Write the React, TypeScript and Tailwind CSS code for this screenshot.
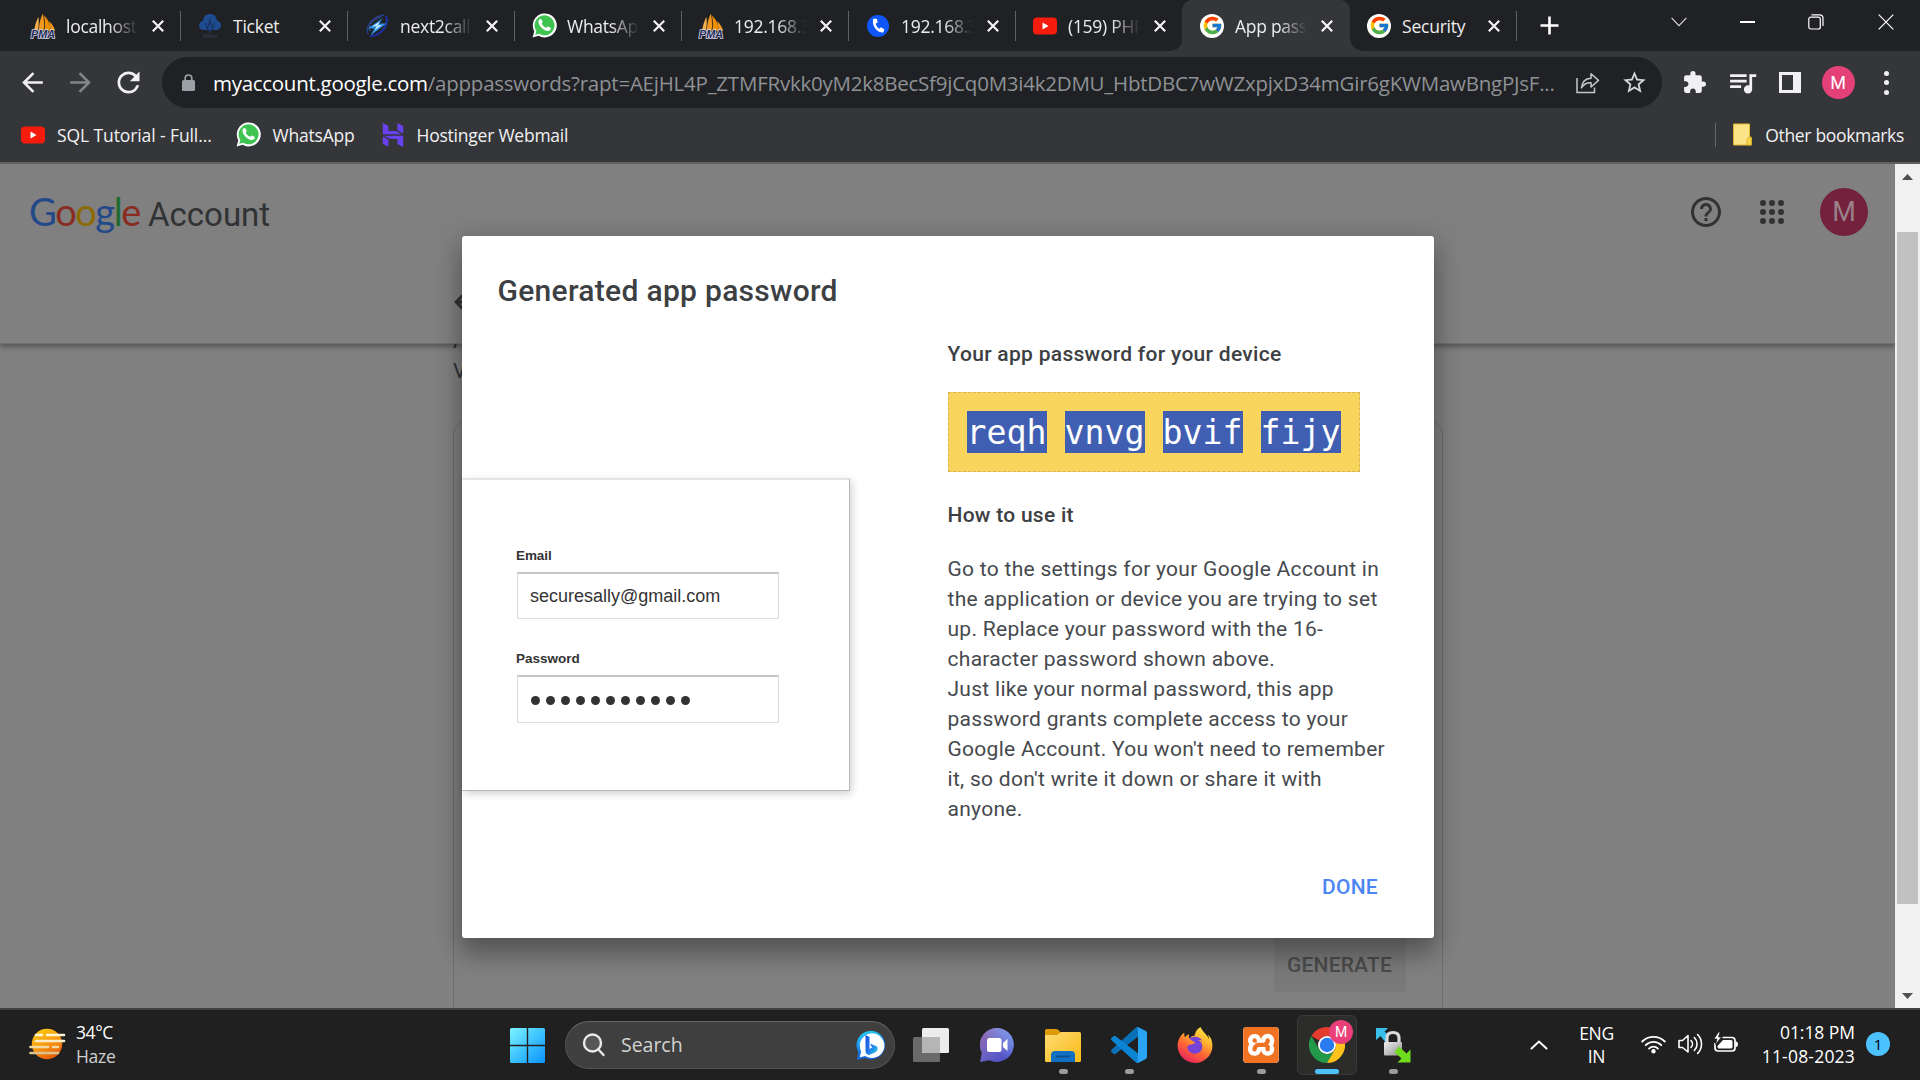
import React, { ReactNode } from "react";
import { FcGoogle } from "react-icons/fc";
import { FaPhoneAlt } from "react-icons/fa";
import { SiHostinger, SiXampp, SiFirefoxbrowser } from "react-icons/si";
import {
  MdExtension,
  MdQueueMusic,
  MdRefresh,
  MdArrowBack,
  MdArrowForward,
  MdStarBorder,
  MdHelpOutline,
} from "react-icons/md";

/* ---------- favicons ---------- */

function PmaIcon() {
  return (
    <svg width="26" height="26" viewBox="0 0 26 26">
      <path d="M4 18 C5 12 6.500 7 8.500 4 C9 9 8.500 14 8 18Z" fill="#f6b04a" />
      <path d="M8.800 18 C9 10 11 4 13 .5 C14 7 14.500 13 13.500 18Z" fill="#f39a1e" />
      <path d="M14 2.500 C18 6 20.500 12 21 18 L14.500 17 C15 12 15 7 14 2.500Z" fill="#ef8f00" />
      <path d="M19 8 C22 11 24.500 14 25 18 L21 17Z" fill="#f39a1e" />
      <text x="13" y="25" textAnchor="middle" textLength="24" lengthAdjust="spacingAndGlyphs" fontFamily="Liberation Sans" fontWeight="700" fontStyle="italic" fontSize="10.500" fill="#262c56" stroke="#d3d5e6" strokeWidth="1.600" paintOrder="stroke">PMA</text>
    </svg>
  );
}

function CloudIcon() {
  return (
    <svg width="24" height="26" viewBox="0 0 24 26">
      <path d="M6 17 C2 17 .5 14 1.200 11.500 C1.800 9 4 8 5 8 C5.300 3.500 8 1 12 1 C16 1 18.700 3.500 19 8 C21 8 23 9.500 23 12.500 C23 15.500 20.500 17 18 17Z" fill="#1f4c91" />
      <path d="M12 7 L9.500 16 L12 19 L14.500 16Z M7.500 10 L9.500 16 M16.500 10 L14.500 16" fill="none" stroke="#173261" strokeWidth="1.200" />
      <text x="12" y="25" textAnchor="middle" fontFamily="Liberation Sans" fontWeight="700" fontSize="5.500" fill="#2f3846">WNet</text>
    </svg>
  );
}

function BoltIcon() {
  return (
    <svg width="24" height="26" viewBox="0 0 24 26">
      <path d="M3 21 C0 14 6 4 19 2" fill="none" stroke="#27418f" strokeWidth="1.300" />
      <path d="M21 3 C24 11 18 22 5 23.500" fill="none" stroke="#1d2f9c" strokeWidth="2.200" />
      <path d="M5 18 C3 12 8 6 17 4" fill="none" stroke="#3b6bd0" strokeWidth="1" strokeDasharray="2 1.400" />
      <path d="M18 5 L2.500 15.500 L9.500 15.500 L5.500 22.500 L21.500 10.500 L14 10.500Z" fill="#2f8fe6" />
      <path d="M15 8.500 L7 13.500 L12 13 L9.500 17.500 L17 12 L12.500 12.500Z" fill="#c9edff" />
    </svg>
  );
}

function WhatsAppIcon() {
  return (
    <svg width="25" height="25" viewBox="0 0 25 25">
      <path d="M.6 24.400 L2.300 18.300 A12 12 0 1 1 6.700 22.800Z" fill="#fff" />
      <path d="M3.200 21.800 L4.300 18 A10 10 0 1 1 7.200 20.800Z" fill="#3fc351" />
      <path d="M9.300 6.600 c-.5-1-1.900-.6-2.500.6 c-1 2 .1 4.600 2.500 7.200 c2.600 2.700 5.300 4 7.500 3.400 c1.500-.5 2.200-1.700 1.900-2.900 c-.9-.7-1.900-1.200-2.900-1.500 c-.8.1-1.100 1.300-1.700 1.400 c-2-.7-3.600-2.200-4.400-4.200 c.2-.7 1-1 1-1.700 c-.3-.9-.8-1.700-1.400-2.300Z" fill="#fff" />
    </svg>
  );
}

function PhoneIcon() {
  return (
    <div className="flex h-[22px] w-[22px] items-center justify-center rounded-full bg-[#1057fb]">
      <FaPhoneAlt size={13} color="#fff" className="rotate-[100deg] -scale-x-100" />
    </div>
  );
}

function YouTubeIcon() {
  return (
    <svg width="24" height="18" viewBox="0 0 24 18">
      <rect y=".5" width="24" height="17" rx="4" fill="#f61c0d" />
      <path d="M9.500 5.600 L15.500 9 L9.500 12.400Z" fill="#fff" />
    </svg>
  );
}

function GoogleBadge() {
  return (
    <div className="flex h-6 w-6 items-center justify-center rounded-full bg-white">
      <FcGoogle size={21} />
    </div>
  );
}

function CloseX() {
  return (
    <svg width="12" height="12" viewBox="0 0 12 12" stroke="#f4f4f5" strokeWidth="2.200">
      <path d="M.8 .8 L11.200 11.200 M11.200 .8 L.8 11.200" />
    </svg>
  );
}

/* ---------- browser chrome ---------- */

type TabInfo = { icon: ReactNode; title: string; fade?: boolean; active?: boolean; sep?: boolean };

const tabs: TabInfo[] = [
  { icon: <PmaIcon />, title: "localhost", fade: true, sep: true },
  { icon: <CloudIcon />, title: "Ticket", sep: true },
  { icon: <BoltIcon />, title: "next2call.", fade: true, sep: true },
  { icon: <WhatsAppIcon />, title: "WhatsApp", fade: true, sep: true },
  { icon: <PmaIcon />, title: "192.168.3", fade: true, sep: true },
  { icon: <PhoneIcon />, title: "192.168.3", fade: true, sep: true },
  { icon: <YouTubeIcon />, title: "(159) PHP", fade: true },
  { icon: <GoogleBadge />, title: "App pass", fade: true, active: true },
  { icon: <GoogleBadge />, title: "Security", sep: true },
];

function Tab({ tab }: { tab: TabInfo }) {
  return (
    <div
      className={
        tab.active
          ? "relative flex h-full w-[167px] items-center rounded-t-[10px] bg-[#35363a] shadow-[-1px_0_0_#35363a]"
          : "relative flex h-full w-[167px] items-center"
      }
    >
      {tab.active && (
        <>
          <div className="absolute bottom-0 -left-[12px] h-3 w-3 bg-[radial-gradient(circle_at_0_0,transparent_11px,#35363a_12px)]" />
          <div className="absolute -right-[12px] bottom-0 h-3 w-3 bg-[radial-gradient(circle_at_100%_0,transparent_11px,#35363a_12px)]" />
        </>
      )}
      <div className="ml-4 flex w-[26px] justify-center">{tab.icon}</div>
      <div
        className={
          tab.fade
            ? "ml-[10px] w-[72px] overflow-hidden text-[17.500px] leading-[26px] tracking-[-0.280px] whitespace-nowrap text-[#eceded] [mask-image:linear-gradient(to_right,black_60%,transparent_100%)]"
            : "ml-[10px] w-[72px] overflow-hidden text-[17.500px] leading-[26px] tracking-[-0.220px] whitespace-nowrap text-[#eceded]"
        }
      >
        {tab.title}
      </div>
      <div className="ml-[14px]">
        <CloseX />
      </div>
      {tab.sep && <div className="ml-auto h-[30px] w-[1.500px] bg-[#606164]" />}
    </div>
  );
}

function TabStrip() {
  return (
    <div className="flex h-[51px] items-center bg-[#202124] pl-[14px]">
      {tabs.map((t, i) => (
        <Tab key={i} tab={t} />
      ))}
      <svg className="ml-[23px]" width="19" height="19" viewBox="0 0 19 19" stroke="#fff" strokeWidth="2.600">
        <path d="M9.500 .5 V18.500 M.5 9.500 H18.500" />
      </svg>
      <div className="mb-[7px] ml-auto flex items-center pr-[26.500px]">
        <svg width="16" height="10" viewBox="0 0 16 10" fill="none" stroke="#dcdcdd" strokeWidth="1.100">
          <path d="M.6 .8 L8 8.700 L15.400 .8" />
        </svg>
        <div className="ml-[53px] h-[1.500px] w-[15px] bg-white" />
        <svg className="ml-[53px]" width="16" height="16" viewBox="0 0 16 16" fill="none" stroke="#fff" strokeWidth="1.200">
          <rect x=".8" y="3.200" width="11.500" height="11.800" rx="2" />
          <path d="M3.500 .8 H11.500 Q15 .8 15 4.300 V12" />
        </svg>
        <svg className="ml-[54px]" width="16" height="16" viewBox="0 0 16 16" stroke="#fff" strokeWidth="1.200">
          <path d="M.7 .7 L15.300 15.300 M15.300 .7 L.7 15.300" />
        </svg>
      </div>
    </div>
  );
}

function Toolbar() {
  return (
    <div className="flex h-[63px] items-center bg-[#35363a]">
      <MdArrowBack className="ml-[17px]" size={31} color="#f1f1f2" />
      <MdArrowForward className="ml-[17px]" size={31} color="#838488" />
      <MdRefresh className="ml-[16px]" size={33} color="#f1f1f2" />
      <div className="ml-[17px] flex h-[51px] w-[1500px] items-center rounded-full bg-[#202124] pr-[14px] pl-[20px]">
        <svg className="shrink-0" width="13" height="17" viewBox="0 0 13 17">
          <path d="M3.200 7 V4.300 Q3.200 1 6.500 1 Q9.800 1 9.800 4.300 V7" fill="none" stroke="#9aa0a6" strokeWidth="1.700" />
          <rect y="6" width="13" height="11" rx="1.500" fill="#9aa0a6" />
        </svg>
        <div className="ml-[18px] text-[20.500px] leading-[30px] whitespace-nowrap">
          <span className="tracking-[-0.290px] text-white">myaccount.google.com</span>
          <span className="tracking-[-0.235px] text-[#8e9195]">
            /apppasswords?rapt=AEjHL4P_ZTMFRvkk0yM2k8BecSf9jCq0M3i4k2DMU_HbtDBC7wWZxpjxD34mGir6gKWMawBngPJsF...
          </span>
        </div>
        <svg className="ml-auto shrink-0" width="24" height="22" viewBox="0 0 24 22" fill="none" stroke="#c4c7c9" strokeWidth="1.500">
          <path d="M1 6 V20.500 H18.500 V15.500" />
          <path d="M5.500 15.800 C6 10 9.500 6.500 15 6.200 V1.800 L22.500 8.400 L15 15 V10.800 C10.500 10.500 7.500 12.500 5.500 15.800Z" strokeLinejoin="round" />
        </svg>
        <MdStarBorder className="ml-[21.500px] shrink-0" size={27} color="#d5d7d9" />
      </div>
      <MdExtension className="ml-[19.500px]" size={25} color="#f1f1f3" />
      <MdQueueMusic className="ml-[19px]" size={33} color="#f1f1f3" />
      <div className="ml-[20px] flex h-[21px] w-[22px] justify-end border-[3px] border-r-[8px] border-[#f1f1f3]" />
      <div className="ml-[21px] flex h-[33px] w-[33px] items-center justify-center rounded-full bg-[#e34178] font-['Roboto'] text-[18px] text-white">M</div>
      <div className="ml-[29px] flex flex-col gap-[4.500px]">
        <div className="h-[5px] w-[5px] rounded-full bg-[#f1f1f3]" />
        <div className="h-[5px] w-[5px] rounded-full bg-[#f1f1f3]" />
        <div className="h-[5px] w-[5px] rounded-full bg-[#f1f1f3]" />
      </div>
    </div>
  );
}

function Bookmarks() {
  return (
    <div className="flex h-[50px] items-center border-b-2 border-[#5f6061] bg-[#35363a] pb-[7px] pl-[21px] text-[17.500px] leading-[26px] whitespace-nowrap text-[#f1f1f2]">
      <YouTubeIcon />
      <div className="ml-3 w-[155px] tracking-[-0.100px]">SQL Tutorial - Full...</div>
      <div className="ml-[24px]">
        <WhatsAppIcon />
      </div>
      <div className="ml-[11.500px] w-[83px] tracking-[-0.200px]">WhatsApp</div>
      <SiHostinger className="ml-[25px]" size={24} color="#6942f0" />
      <div className="ml-[12px] tracking-[-0.230px]">Hostinger Webmail</div>
      <div className="ml-auto h-6 w-px bg-[#66676a]" />
      <svg className="ml-[17px]" width="20" height="23" viewBox="0 0 20 23">
        <path d="M.6 1 H16.500 V14 H18 V22 H.6Z" fill="#fde388" stroke="#e5bb2e" strokeWidth="1" />
        <path d="M14 22 V16.500 Q14 14.500 16 14.500 H18.500 V22Z" fill="#f7d348" stroke="#d8ae25" strokeWidth=".8" />
      </svg>
      <div className="mr-[16px] ml-[12px] tracking-[-0.330px]">Other bookmarks</div>
    </div>
  );
}

/* ---------- web page ---------- */

function PageHeader() {
  return (
    <header className="relative z-10 flex h-[180px] flex-col border-b border-[#6f6f70] bg-[#808080] shadow-[0_3px_5px_rgba(0,0,0,0.320)]">
      <div className="flex h-24 items-center pl-[29px]">
        <div className="flex items-baseline pt-[3px] leading-[48px]">
          <div className="font-['Lato'] text-[38px] tracking-[-1.400px]">
            <span className="text-[#24498b]">G</span>
            <span className="text-[#8a2b20]">o</span>
            <span className="text-[#8c6a00]">o</span>
            <span className="text-[#24498b]">g</span>
            <span className="text-[#1f6a31]">l</span>
            <span className="text-[#8a2b20]">e</span>
          </div>
          <div className="ml-[8px] font-['Roboto'] text-[33px] text-[#303234]">Account</div>
        </div>
        <MdHelpOutline className="ml-auto" size={36} color="#303234" />
        <div className="ml-[36px] grid grid-cols-3 gap-[3px]">
          {Array.from({ length: 9 }, (_, i) => (
            <div key={i} className="h-[6px] w-[6px] rounded-full bg-[#303234]" />
          ))}
        </div>
        <div className="mr-[27px] ml-[36px] flex h-12 w-12 items-center justify-center rounded-full bg-[#73213d] pt-[2px] font-['Roboto'] text-[27px] text-[#9a8088]">M</div>
      </div>
      <div className="flex h-[84px] items-center pt-[1px] pl-[448px]">
        <MdArrowBack size={36} color="#303234" />
      </div>
    </header>
  );
}

function PageBody() {
  return (
    <main className="-mt-[18px] ml-[453px] w-[990px] font-['Roboto'] text-[21px] leading-[30px] text-[#303336]">
      <div>A</div>
      <div>V</div>
      <section className="mt-[36px] h-[620px] rounded-xl border border-[#6d6d6e]">
        <div className="mt-[515px] mr-[36px] ml-auto flex h-[54px] w-[132px] items-center justify-center rounded-[4px] bg-[#797979] pr-[1px] font-medium tracking-[0.190px] text-[#4b4b4b]">GENERATE</div>
      </section>
    </main>
  );
}

function SignInIllustration() {
  return (
    <div className="mt-[142px] flex h-[313px] w-[388px] flex-col border border-t-2 border-l-0 border-[#b9b9b9] border-t-[#e4e4e4] bg-white pt-[68px] pl-[55px] font-['Liberation_Sans'] text-[#333] shadow-[2px_3px_8px_rgba(0,0,0,0.180)]">
      <div className="-ml-px text-[13.500px] leading-[16px] font-bold tracking-[-0.080px]">Email</div>
      <div className="mt-[8px] flex h-[47px] w-[262px] items-center border border-t-2 border-[#dcdcdc] border-t-[#c6c6c6] pl-[12px] text-[18px]">securesally@gmail.com</div>
      <div className="mt-[32px] -ml-px text-[13.500px] leading-[16px] font-bold">Password</div>
      <div className="mt-[8px] flex h-[48px] w-[262px] items-center gap-[6px] border border-t-2 border-[#dcdcdc] border-t-[#c6c6c6] pt-[2px] pl-[12.500px]">
        {Array.from({ length: 11 }, (_, i) => (
          <div key={i} className="h-[9px] w-[9px] rounded-full bg-[#333]" />
        ))}
      </div>
    </div>
  );
}

function PasswordDialog() {
  return (
    <div className="absolute top-[72px] left-[462px] z-20 flex h-[702px] w-[972px] flex-col rounded-[3px] bg-white font-['Roboto'] text-[21px] leading-[30px] text-[#3c4043] shadow-[0_18px_23px_rgba(0,0,0,0.240),0_4px_24px_6px_rgba(0,0,0,0.140)]">
      <h1 className="h-[100px] pt-[35px] pl-[35.500px] text-[30px] leading-[40px] font-medium tracking-[0.300px]">Generated app password</h1>
      <div className="flex h-[514px]">
        <div className="w-[485.500px]">
          <SignInIllustration />
        </div>
        <div className="pt-[3px] whitespace-nowrap">
          <h2 className="font-medium tracking-[0.293px]">Your app password for your device</h2>
          <div className="mt-[23px] flex h-20 w-[412px] items-center gap-[18px] border border-dashed border-[#d3b955] bg-[#fad55e] pl-[18px] font-['DejaVu_Sans_Mono'] text-[33.200px] text-white">
            <span className="h-[42px] w-20 bg-[#405fb3] pt-[2px] leading-[40px]">reqh</span>
            <span className="h-[42px] w-20 bg-[#405fb3] pt-[2px] leading-[40px]">vnvg</span>
            <span className="h-[42px] w-20 bg-[#405fb3] pt-[2px] leading-[40px]">bvif</span>
            <span className="h-[42px] w-20 bg-[#405fb3] pt-[2px] leading-[40px]">fijy</span>
          </div>
          <h2 className="mt-[28px] font-medium tracking-[0.270px]">How to use it</h2>
          <p className="mt-[24px] tracking-[0.285px] text-[#46494d]">
            Go to the settings for your Google Account in<br />
            the application or device you are trying to set<br />
            up. Replace your password with the 16-<br />
            character password shown above.<br />
            Just like your normal password, this app<br />
            password grants complete access to your<br />
            Google Account. You won't need to remember<br />
            it, so don't write it down or share it with<br />
            anyone.
          </p>
        </div>
      </div>
      <div className="mt-[22px] mr-[56px] self-end font-medium tracking-[0.250px] text-[#4c86f5]">DONE</div>
    </div>
  );
}

function Scrollbar() {
  return (
    <div className="flex w-[25px] flex-col items-center bg-[#f1f1f1]">
      <svg className="mt-[10px]" width="11" height="6" viewBox="0 0 11 6">
        <path d="M5.500 0 L11 6 H0Z" fill="#505050" />
      </svg>
      <div className="mt-[52px] h-[672px] w-[21px] bg-[#c1c1c1]" />
      <svg className="mt-[89px]" width="11" height="6" viewBox="0 0 11 6">
        <path d="M5.500 6 L11 0 H0Z" fill="#505050" />
      </svg>
    </div>
  );
}

/* ---------- taskbar ---------- */

function HazeIcon() {
  return (
    <svg width="38" height="32" viewBox="0 0 38 32">
      <defs>
        <linearGradient id="sun" x1="0.200" y1="0" x2="0.700" y2="1">
          <stop offset="0" stopColor="#fccb0e" />
          <stop offset=".5" stopColor="#f99a10" />
          <stop offset="1" stopColor="#e4560b" />
        </linearGradient>
      </defs>
      <circle cx="19" cy="16" r="15.200" fill="url(#sun)" />
      <g strokeLinecap="round" strokeWidth="2.600">
        <path d="M8 7 H14 M19 7 H36" stroke="#fff3d6" />
        <path d="M8 13 H36" stroke="#fdeccb" />
        <path d="M2.500 19 H20 M25 19 H30" stroke="#f3d8a0" />
        <path d="M2.500 25 H30" stroke="#dcc28d" />
      </g>
    </svg>
  );
}

function StartIcon() {
  return (
    <svg width="35" height="35" viewBox="0 0 35 35">
      <defs>
        <linearGradient id="win" gradientUnits="userSpaceOnUse" x1="0" y1="0" x2="35" y2="35">
          <stop offset="0" stopColor="#7df4ff" />
          <stop offset=".5" stopColor="#3fc3ff" />
          <stop offset="1" stopColor="#0a92fb" />
        </linearGradient>
      </defs>
      <path fill="url(#win)" d="M1.500 0 H16.800 V16.800 H0 V1.500 Q0 0 1.500 0Z M18.200 0 H33.500 Q35 0 35 1.500 V16.800 H18.200Z M0 18.200 H16.800 V35 H1.500 Q0 35 0 33.500Z M18.200 18.200 H35 V33.500 Q35 35 33.500 35 H18.200Z" />
    </svg>
  );
}

function BingIcon() {
  return (
    <svg width="30" height="31" viewBox="0 0 30 31">
      <defs>
        <linearGradient id="bring" x1=".3" y1="0" x2=".6" y2="1">
          <stop offset="0" stopColor="#25cdf2" />
          <stop offset=".5" stopColor="#1b87ee" />
          <stop offset="1" stopColor="#1759d6" />
        </linearGradient>
        <linearGradient id="bglyph" x1="0" y1="0" x2="1" y2="1">
          <stop offset="0" stopColor="#1b52e0" />
          <stop offset=".5" stopColor="#2277ea" />
          <stop offset="1" stopColor="#2ccfe8" />
        </linearGradient>
      </defs>
      <path d="M1 30 L2.500 22.500 A14.300 14.300 0 1 1 8.500 28 Z" fill="url(#bring)" />
      <path d="M3.800 27.300 L5.200 21.500 A12.300 12.300 0 1 1 9.200 25.900Z" fill="#fff" />
      <path d="M9.500 5 L13.500 7 V19 L16 17.500 L14 13.500 L21 16.500 Q23 20 19 22.500 L13 25 Q9.500 24.500 9.500 21Z" fill="url(#bglyph)" />
    </svg>
  );
}

function TaskViewIcon() {
  return (
    <svg width="36" height="34" viewBox="0 0 36 34">
      <rect x="9" y="0" width="27" height="25" rx="1.500" fill="#ececec" />
      <rect x="0" y="9" width="27" height="25" rx="1.500" fill="#6a6a6a" />
      <rect x="9" y="9" width="18" height="16" fill="#b5b5b5" />
    </svg>
  );
}

function ChatIcon() {
  return (
    <svg width="34" height="34" viewBox="0 0 34 34">
      <defs>
        <linearGradient id="chat" x1="0" y1=".2" x2=".7" y2="1">
          <stop offset="0" stopColor="#9567ae" />
          <stop offset=".5" stopColor="#6c63c6" />
          <stop offset="1" stopColor="#4e50c4" />
        </linearGradient>
        <linearGradient id="chat2" x1="1" y1="0" x2=".4" y2=".6">
          <stop offset="0" stopColor="#7fa4f2" />
          <stop offset="1" stopColor="#7fa4f2" stopOpacity="0" />
        </linearGradient>
      </defs>
      <path d="M0 34 L1.800 25 A17 17 0 1 1 9.500 32.300Z" fill="url(#chat)" />
      <path d="M0 34 L1.800 25 A17 17 0 1 1 9.500 32.300Z" fill="url(#chat2)" />
      <rect x="7" y="10" width="14.500" height="14" rx="2.500" fill="#fff" />
      <path d="M23 15 L27.500 11 V23 L23 19Z" fill="#fff" />
    </svg>
  );
}

function ExplorerIcon() {
  return (
    <svg width="36" height="33" viewBox="0 0 36 33">
      <defs>
        <linearGradient id="fold" x1="0" y1="0" x2="1" y2="1">
          <stop offset="0" stopColor="#ffdc74" />
          <stop offset="1" stopColor="#f9b915" />
        </linearGradient>
      </defs>
      <path d="M0 1.500 Q0 0 1.500 0 H11 Q13 0 14 1.500 L16 4 V8 H0Z" fill="#df9a07" />
      <path d="M0 6 H12 L16 3 H34.500 Q36 3 36 4.500 V31.500 Q36 33 34.500 33 H1.500 Q0 33 0 31.500Z" fill="url(#fold)" />
      <path d="M6 33 V26 Q6 22 10 22 H26 Q30 22 30 26 V33Z" fill="#1170c4" />
      <path d="M11 27.500 H25" stroke="#0b4c8c" strokeWidth="1.800" />
    </svg>
  );
}

function CodeIcon() {
  return (
    <svg width="36" height="36" viewBox="0 0 100 100">
      <path d="M96 11 L75.500 1 A6 6 0 0 0 68.500 2 L1.400 63.500 a4 4 0 0 0 0 6 L7 74.500 a4 4 0 0 0 5.200 .2 L93 13Z" fill="#0a70b8" />
      <path d="M96 89 L75.500 99 A6 6 0 0 1 68.500 98 L1.400 36.500 a4 4 0 0 1 0 -6 L7 25.500 a4 4 0 0 1 5.200 -.2 L93 87Z" fill="#0b84d4" />
      <path d="M75.500 99.200 A6 6 0 0 1 68.500 98 C70.700 100.200 75 98.600 75 95.500 V4.500 C75 1.400 71 -.2 68.500 2 A6 6 0 0 1 75.500 .8 L96.500 11 A6 6 0 0 1 100 16.500 V83.500 A6 6 0 0 1 96.500 89Z" fill="#29a5f3" />
    </svg>
  );
}

function FirefoxIcon() {
  return (
    <div className="relative h-[36px] w-[36px]">
      <svg className="absolute inset-0" width="36" height="36" viewBox="0 0 36 36">
        <defs>
          <linearGradient id="fox" x1=".85" y1="0" x2=".3" y2="1">
            <stop offset="0" stopColor="#fff24a" />
            <stop offset=".35" stopColor="#ffb22e" />
            <stop offset=".65" stopColor="#ff6434" />
            <stop offset="1" stopColor="#e8235f" />
          </linearGradient>
        </defs>
        <circle cx="18" cy="19" r="10" fill="#7543d8" />
      </svg>
      <SiFirefoxbrowser className="absolute inset-0" size={36} fill="url(#fox)" />
    </div>
  );
}

function XamppIcon() {
  return (
    <div className="flex h-9 w-9 items-center justify-center rounded-[4px] bg-white">
      <SiXampp size={36} color="#f07324" />
    </div>
  );
}

function ChromeIcon() {
  return (
    <div className="relative">
      <svg width="36" height="36" viewBox="0 0 48 48">
        <path d="M3.200 12 A24 24 0 0 1 44.800 12 L24 12 A12 12 0 0 0 13.600 18Z" fill="#e33b2e" />
        <path d="M3.200 12 A24 24 0 0 0 24 48 L34.400 30 A12 12 0 0 1 13.600 30Z" fill="#229a48" />
        <path d="M44.800 12 A24 24 0 0 1 24 48 L34.400 30 A12 12 0 0 0 24 12Z" fill="#fcc31e" />
        <circle cx="24" cy="24" r="12" fill="#fff" />
        <circle cx="24" cy="24" r="9.600" fill="#2a7bf0" />
      </svg>
      <div className="absolute -top-[7px] left-[20px] flex h-6 w-6 items-center justify-center rounded-full bg-[#ea3f79] font-['Roboto'] text-[14px] text-white">M</div>
    </div>
  );
}

function TransferLockIcon() {
  return (
    <svg width="36" height="36" viewBox="0 0 36 36">
      <defs>
        <linearGradient id="lock" x1="0" y1="0" x2="1" y2="1">
          <stop offset="0" stopColor="#f1f1f1" />
          <stop offset="1" stopColor="#8d8d8d" />
        </linearGradient>
      </defs>
      <path d="M1 1 H13 L9.500 4.500 L17 11 L11 16 L5.500 9 L1 13Z" fill="#39c0ea" />
      <path d="M12 16 V11 Q12 5.500 18 5.500 Q24 5.500 24 11 V16" fill="#202020" stroke="#d9d9d9" strokeWidth="3.200" />
      <rect x="9" y="15" width="18" height="13.500" rx="1" fill="url(#lock)" />
      <path d="M24 19.500 L31.500 26.500 L35.500 22.500 V35.500 H22.500 L26.500 31.500 L19.500 25Z" fill="#6fdc1e" />
    </svg>
  );
}

type AppInfo = { icon: ReactNode; state?: "open" | "focused" };

const apps: AppInfo[] = [
  { icon: <TaskViewIcon /> },
  { icon: <ChatIcon /> },
  { icon: <ExplorerIcon />, state: "open" },
  { icon: <CodeIcon />, state: "open" },
  { icon: <FirefoxIcon /> },
  { icon: <XamppIcon />, state: "open" },
  { icon: <ChromeIcon />, state: "focused" },
  { icon: <TransferLockIcon />, state: "open" },
];

function TaskApp({ app }: { app: AppInfo }) {
  return (
    <div
      className={
        app.state === "focused"
          ? "mx-[3px] flex h-[60px] w-[60px] flex-col items-center rounded-[6px] border border-[#393938] bg-[#2c2c2b]"
          : "mx-[3px] flex h-[60px] w-[60px] flex-col items-center border border-transparent"
      }
    >
      <div className="mt-[11px] flex h-9 items-center">{app.icon}</div>
      {app.state === "open" && <div className="mt-[6px] h-[5px] w-[9px] rounded-full bg-[#9b9b9b]" />}
      {app.state === "focused" && <div className="mt-[6px] h-[5px] w-6 rounded-full bg-[#4cc2ff]" />}
    </div>
  );
}

function Taskbar() {
  return (
    <div className="flex h-[72px] items-center border-t-2 border-[#414141] bg-[#202020] text-white">
      <div className="flex w-[510px] items-center pb-[2px] pl-[28px]">
        <HazeIcon />
        <div className="ml-[10px] text-[17.500px] leading-[24px]">
          <div className="tracking-[-0.400px]">34°C</div>
          <div className="tracking-[-0.300px] text-[#cfcfcf]">Haze</div>
        </div>
      </div>
      <StartIcon />
      <div className="ml-[20px] flex h-12 w-[330px] items-center rounded-full border-[1.500px] border-[#545454] border-t-[#676767] bg-[#3f3f3f] pr-[8px] pl-[16px]">
        <svg width="24" height="24" viewBox="0 0 24 24" fill="none" stroke="#e9e9e9" strokeWidth="2.400" strokeLinecap="round">
          <circle cx="10.500" cy="10" r="8.500" fill="#565656" />
          <path d="M16.500 16.500 L21.500 22" />
        </svg>
        <div className="ml-[15px] text-[19.500px] tracking-[-0.020px] text-[#d2d2d2]">Search</div>
        <div className="ml-auto">
          <BingIcon />
        </div>
      </div>
      <div className="ml-[3px] flex">
        {apps.map((a, i) => (
          <TaskApp key={i} app={a} />
        ))}
      </div>
      <svg className="ml-auto" width="18" height="10" viewBox="0 0 18 10" fill="none" stroke="#fff" strokeWidth="2" strokeLinecap="round">
        <path d="M1.500 8.500 L9 1.500 L16.500 8.500" />
      </svg>
      <div className="ml-[29px] w-[39px] text-center text-[17.500px] leading-[23px] tracking-[-0.400px]">
        <div>ENG</div>
        <div>IN</div>
      </div>
      <svg className="mb-[2px] ml-[25px]" width="25" height="20" viewBox="0 0 25 20" fill="none" stroke="#fff" strokeWidth="1.800" strokeLinecap="round">
        <path d="M1.200 7.500 A16 16 0 0 1 23.800 7.500" />
        <path d="M4.700 11.200 A11 11 0 0 1 20.300 11.200" />
        <path d="M8 14.600 A6.300 6.300 0 0 1 17 14.600" />
        <circle cx="12.500" cy="17.300" r="1.300" fill="#fff" />
      </svg>
      <svg className="mb-[2px] ml-[11.500px]" width="25" height="22" viewBox="0 0 25 22" fill="none" stroke="#fff" strokeWidth="1.600" strokeLinecap="round" strokeLinejoin="round">
        <path d="M1 7.500 H4.500 L10 2.500 V19 L4.500 14.500 H1Z" />
        <path d="M13 7.500 A5 5 0 0 1 13 14.500 M16.300 4.500 A9 9 0 0 1 16.300 17.500 M19.600 1.500 A13.500 13.500 0 0 1 19.600 20.500" />
      </svg>
      <svg className="mb-[5px] ml-[10.500px]" width="26" height="22" viewBox="0 0 26 22">
        <path d="M9.500 5.500 H19 Q22 5.500 22 8.500 V16 Q22 19 19 19 H5 Q2 19 2 16 V11" fill="none" stroke="#fff" strokeWidth="1.700" />
        <path d="M10 8 H18 Q19.500 8 19.500 9.500 V15 Q19.500 16.500 18 16.500 H6 Q4.500 16.500 4.500 15 V14Z" fill="#fff" />
        <path d="M22.500 9.500 H23.500 Q25 10 25 12.200 Q25 14.500 23.500 15 H22.500Z" fill="#fff" />
        <path d="M5.500 0 L1 7 H4 L2.500 12.500 L8.500 5 H5.500 L7 0Z" fill="#fff" stroke="#202020" strokeWidth=".7" />
      </svg>
      <div className="ml-[18px] w-[98px] pb-[2px] text-right text-[17.500px] leading-[24px]">
        <div className="tracking-[-0.050px]">01:18 PM</div>
        <div className="tracking-[0.200px]">11-08-2023</div>
      </div>
      <div className="mr-[30px] mb-[2px] ml-[11px] flex h-6 w-6 items-center justify-center rounded-full bg-[#4cc2ff] text-[15px] text-black">1</div>
    </div>
  );
}

export default function App() {
  return (
    <div className="flex h-[1080px] w-[1920px] flex-col overflow-hidden bg-[#202124] font-['Open_Sans',sans-serif]">
      <TabStrip />
      <Toolbar />
      <Bookmarks />
      <div className="flex h-[844px]">
        <div className="relative w-[1895px] overflow-hidden bg-[#808080]">
          <PageHeader />
          <PageBody />
          <PasswordDialog />
        </div>
        <Scrollbar />
      </div>
      <Taskbar />
    </div>
  );
}
